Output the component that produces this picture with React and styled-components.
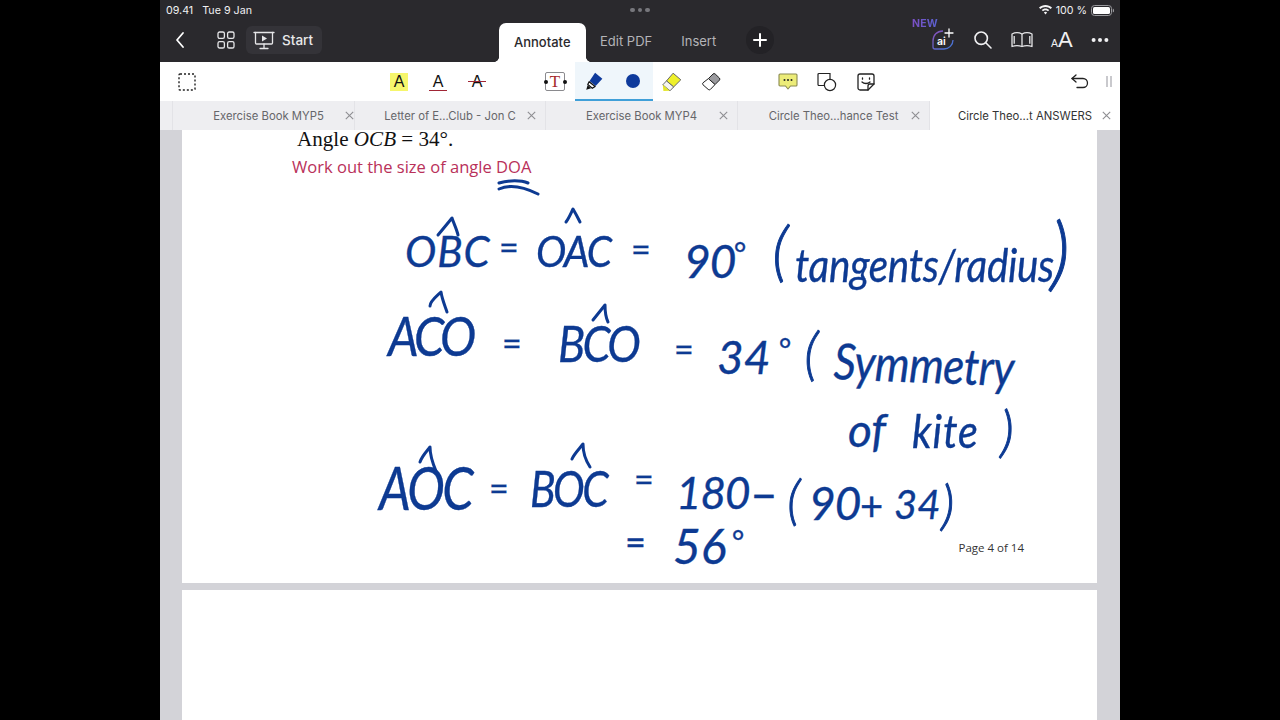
import React from "react";
import styled, { createGlobalStyle } from "styled-components";

const Global = createGlobalStyle`
  html, body { margin: 0; padding: 0; background: #000; height: 100%; overflow: hidden; }
  #root { height: 100%; }
  * { box-sizing: border-box; }
`;

const UI = `"Inter", "Liberation Sans", sans-serif`;
const INK = "#0d3a92";

const Stage = styled.div`
  height: 720px;
  display: flex;
  justify-content: center;
  background: #000;
`;
const Tablet = styled.div`
  width: 960px;
  height: 720px;
  display: flex;
  flex-direction: column;
  overflow: hidden;
  font-family: ${UI};
`;

/* Status bar */
const StatusBar = styled.div`
  height: 20px;
  flex: none;
  display: grid;
  grid-template-columns: 1fr auto 1fr;
  align-items: center;
  padding: 0 6px;
  background: #2a292d;
  color: #f0f0f2;
  font-size: 10.7px;
`;
const StatusLeft = styled.div`
  display: flex;
  gap: 9px;
`;
const StatusDots = styled.div`
  display: flex;
  gap: 3px;
  & > i {
    width: 4.5px;
    height: 4.5px;
    border-radius: 50%;
    background: #77777c;
  }
`;
const StatusRight = styled.div`
  justify-self: end;
  display: flex;
  align-items: center;
  gap: 4px;
`;

/* Dark navigation bar */
const NavBar = styled.div`
  height: 42px;
  flex: none;
  display: flex;
  align-items: flex-end;
  background: #2a292d;
  color: #fff;
`;
const NavLeft = styled.div`
  width: 339px;
  height: 42px;
  padding-left: 13px;
  padding-bottom: 2px;
  display: flex;
  align-items: center;
`;
const BackSlot = styled.div`
  display: flex;
  justify-content: center;
  width: 14px;
  flex: none;
`;
const GridSlot = styled.div`
  display: flex;
  justify-content: center;
  width: 24px;
  margin-left: 27px;
  flex: none;
`;
const StartButton = styled.div`
  width: 76px;
  height: 28px;
  margin-left: 8px;
  display: flex;
  align-items: center;
  gap: 7px;
  padding-left: 7px;
  background: #343338;
  border-radius: 6px;
  font-size: 13.5px;
  font-weight: 500;
  color: #e8e8ea;
`;
const ModeTab = styled.div`
  position: relative;
  height: ${(p) => (p.$active ? 39 : 36)}px;
  padding: 0 ${(p) => (p.$active ? 15 : 14.5)}px;
  padding-bottom: ${(p) => (p.$active ? 2 : 0)}px;
  margin-bottom: ${(p) => (p.$active ? 0 : 3)}px;
  display: flex;
  align-items: center;
  font-size: 13px;
  font-weight: ${(p) => (p.$active ? 500 : 400)};
  color: ${(p) => (p.$active ? "#2a292d" : "#b4b4b8")};
  background: ${(p) => (p.$active ? "#fff" : "transparent")};
  border-radius: 7px 7px 0 0;
`;
const ActiveTabFlare = styled.i`
  position: absolute;
  bottom: 0;
  width: 5px;
  height: 5px;
  ${(p) => (p.$side === "left" ? "left: -5px;" : "right: -5px;")}
  background: radial-gradient(
    circle at ${(p) => (p.$side === "left" ? "0 0" : "100% 0")},
    transparent 4.6px,
    #fff 5.2px
  );
`;
const PlusButton = styled.div`
  width: 28px;
  height: 28px;
  margin: 0 0 8px 15px;
  display: flex;
  align-items: center;
  justify-content: center;
  border-radius: 50%;
  background: #232226;
`;
const NavRight = styled.div`
  margin-left: auto;
  height: 42px;
  padding: 0 11px 2px 0;
  display: flex;
  align-items: center;
  gap: 18px;
`;
const AiWrap = styled.div`
  position: relative;
  width: 24px;
  height: 24px;
`;
const NewBadge = styled.span`
  position: absolute;
  left: -19px;
  top: -11px;
  font-size: 10.5px;
  font-weight: 700;
  letter-spacing: 0.2px;
  background: linear-gradient(90deg, #7c4fc4, #5a62d0);
  -webkit-background-clip: text;
  background-clip: text;
  color: transparent;
`;

/* White tool bar */
const ToolBar = styled.div`
  height: 39px;
  flex: none;
  display: flex;
  align-items: stretch;
  background: #fff;
  padding-left: 7.5px;
  padding-right: 1px;
`;
const Tool = styled.div`
  width: 39px;
  display: flex;
  align-items: center;
  justify-content: center;
  flex: none;
`;
const ToolGroup = styled.div`
  display: flex;
  margin-left: ${(p) => p.$gap || 0}px;
`;
const ActiveGroup = styled(ToolGroup)`
  width: 78px;
  background: #eff6fb;
  border-bottom: 2px solid #3f9fd8;
`;
const TailGroup = styled(ToolGroup)`
  margin-left: auto;
`;
const NarrowTool = styled(Tool)`
  width: 20px;
`;
const GlyphA = styled.span`
  position: relative;
  width: 18px;
  height: 18px;
  display: flex;
  align-items: center;
  justify-content: center;
  font-family: "Liberation Sans", sans-serif;
  font-size: 16px;
  line-height: 1;
  color: #111;
  background: ${(p) => (p.$hl ? "#f6f66c" : "transparent")};
  &::after {
    content: "";
    display: ${(p) => (p.$mark ? "block" : "none")};
    position: absolute;
    left: 0;
    right: 0;
    height: 1.5px;
    background: #a02535;
    top: ${(p) => (p.$mark === "under" ? 17 : 8)}px;
  }
`;
const TextBoxIcon = styled.span`
  position: relative;
  width: 20px;
  height: 19px;
  display: flex;
  align-items: center;
  justify-content: center;
  border: 1.2px solid #8a8a8e;
  border-radius: 2px;
  font-family: "Liberation Serif", serif;
  font-size: 17px;
  color: #a52a2a;
  &::before,
  &::after {
    content: "";
    position: absolute;
    top: 6.5px;
    width: 4px;
    height: 4px;
    border-radius: 50%;
    background: #111;
  }
  &::before { left: -2.5px; }
  &::after { right: -2.5px; }
`;
const ColorDot = styled.span`
  width: 14px;
  height: 14px;
  border-radius: 50%;
  background: #0e3a9c;
`;

/* Document tabs */
const TabStrip = styled.div`
  height: 29px;
  flex: none;
  display: flex;
  background: #eeeef1;
  padding-left: 12px;
`;
const DocTab = styled.div`
  width: ${(p) => p.$w}px;
  flex: none;
  display: grid;
  grid-template-columns: 1fr auto 1fr;
  align-items: center;
  padding-left: ${(p) => p.$pl || 0}px;
  font-size: 11.3px;
  color: ${(p) => (p.$active ? "#333" : "#66666a")};
  background: ${(p) => (p.$active ? "#fff" : "transparent")};
  border-left: 1px solid #e3e3e7;
`;
const DocTitle = styled.span`
  grid-column: 2;
  white-space: nowrap;
`;
const DocClose = styled.span`
  grid-column: 3;
  justify-self: end;
  padding-right: ${(p) => p.$inset}px;
  display: flex;
  color: #8e8e92;
`;

/* Document area */
const Viewer = styled.div`
  flex: 1;
  min-height: 0;
  padding: 0 23px 0 22px;
  background: #d3d3d8;
  display: flex;
  flex-direction: column;
  gap: 7px;
`;
const Page = styled.div`
  position: relative;
  height: 453px;
  flex: none;
  background: #fff;
  display: flex;
  flex-direction: column;
`;
const BlankPage = styled.div`
  flex: 1;
  background: #fff;
`;
const Question = styled.div`
  margin: 0 0 0 115px;
  font-family: "Liberation Serif", serif;
  font-size: 21.1px;
  line-height: 18px;
  color: #111;
  white-space: nowrap;
`;
const Task = styled.div`
  margin: 8px 0 0 110px;
  font-family: "Open Sans", sans-serif;
  font-size: 16.55px;
  font-weight: 500;
  line-height: 22px;
  color: #b9315a;
  white-space: nowrap;
`;
const PageNumber = styled.div`
  margin: auto 73px 27px auto;
  font-family: "Open Sans", sans-serif;
  font-size: 11.5px;
  line-height: 16px;
  color: #333;
`;

/* Ink annotations lying over the page: their place on the page is the content */
const InkLayer = styled.div`
  position: absolute;
  inset: 0;
  pointer-events: none;
`;
const InkMarks = styled.svg`
  position: absolute;
  left: 0;
  top: 0;
  width: 915px;
  height: 453px;
`;
const InkText = styled.span`
  position: absolute;
  left: ${(p) => p.$x - 182}px;
  top: ${(p) => p.$y - 130 - p.$s}px;
  font-family: "Lato", "Noto Sans", sans-serif;
  font-style: ${(p) => (p.$plain ? "normal" : "italic")};
  font-weight: ${(p) => (p.$thin ? 300 : 400)};
  font-size: ${(p) => p.$s}px;
  line-height: ${(p) => p.$s * 1.2}px;
  letter-spacing: ${(p) => p.$ls || 0}px;
  -webkit-text-stroke: ${(p) => (p.$thin ? 0.9 : 0.35)}px ${INK};
  color: ${INK};
  white-space: nowrap;
  transform-origin: left bottom;
  transform: scaleX(${(p) => p.$sx || 1}) rotate(${(p) => p.$r || 0}deg);
`;

const inkWords = [
  { t: "OBC", x: 405, y: 268, s: 42, ls: 1 },
  { t: "=", x: 499, y: 261, s: 34, plain: 1 },
  { t: "OAC", x: 536, y: 268, s: 42, ls: -2, sx: 0.97 },
  { t: "=", x: 631, y: 263, s: 34, plain: 1 },
  { t: "90", x: 684, y: 279, s: 46, ls: -1 },
  { t: "°", x: 733, y: 265, s: 30 },
  { t: "(", x: 772, y: 275, s: 66, thin: 1 },
  { t: "tangents/radius", x: 795, y: 283, s: 46, ls: -0.4, sx: 0.88 },
  { t: ")", x: 1050, y: 282, s: 80, thin: 1 },
  { t: "ACO", x: 388, y: 358, s: 54, ls: -4, sx: 0.9 },
  { t: "=", x: 502, y: 357, s: 34, plain: 1 },
  { t: "BCO", x: 558, y: 363, s: 50, ls: -3, sx: 0.9 },
  { t: "=", x: 674, y: 363, s: 34, plain: 1 },
  { t: "34", x: 717, y: 375, s: 46, ls: 0 },
  { t: "°", x: 778, y: 361, s: 30 },
  { t: "(", x: 804, y: 375, s: 58, thin: 1 },
  { t: "Symmetry", x: 833, y: 380, s: 50, ls: -0.6, r: 2, sx: 0.88 },
  { t: "of", x: 848, y: 448, s: 46 },
  { t: "kite", x: 912, y: 449, s: 46, ls: 1, sx: 0.9 },
  { t: ")", x: 1000, y: 452, s: 56, thin: 1 },
  { t: "AOC", x: 379, y: 511, s: 60, ls: -3, sx: 0.84 },
  { t: "=", x: 489, y: 502, s: 34, plain: 1 },
  { t: "BOC", x: 530, y: 508, s: 50, ls: -3, sx: 0.85 },
  { t: "=", x: 634, y: 493, s: 34, plain: 1 },
  { t: "180", x: 676, y: 510, s: 44, ls: -1 },
  { t: "–", x: 750, y: 512, s: 48, plain: 1 },
  { t: "(", x: 787, y: 521, s: 54, thin: 1 },
  { t: "90", x: 809, y: 521, s: 46, ls: -1 },
  { t: "+", x: 860, y: 522, s: 40, plain: 1 },
  { t: "34", x: 894, y: 520, s: 40, ls: 0 },
  { t: ")", x: 941, y: 526, s: 54, thin: 1 },
  { t: "=", x: 625, y: 556, s: 36, plain: 1 },
  { t: "56", x: 673, y: 565, s: 48, ls: 0 },
  { t: "°", x: 731, y: 553, s: 30 },
];

/* Hat marks and the double underline, in screen coordinates */
const inkStrokes = [
  "M438 235 C443 229 448 223 452 218 C454 224 457 230 458 235",
  "M566 222 C569 218 571 213 573 209 C576 214 578 218 580 222",
  "M430 306 C430 301 437 296 441 292 C442 299 445 306 447 312",
  "M593 320 C597 315 601 310 605 305 C605 312 606 318 608 322",
  "M420 462 C422 456 427 451 430 447 C430 455 433 464 436 471",
  "M572 459 C574 454 580 448 583 444 C583 452 586 461 590 467",
  "M499 183 C509 180 521 180 528 183",
  "M499 189 C510 184 524 187 538 194",
];

const Back = () => (
  <svg width="12" height="18" viewBox="0 0 12 18" fill="none" stroke="#fff" strokeWidth="1.8" strokeLinecap="round" strokeLinejoin="round">
    <path d="M9 2 L3 9 L9 16" />
  </svg>
);
const GridIcon = () => (
  <svg width="18" height="18" viewBox="0 0 18 18" fill="none" stroke="#e6e6e8" strokeWidth="1.3">
    <rect x="1" y="1" width="6.4" height="6.4" rx="1.6" />
    <rect x="10.6" y="1" width="6.4" height="6.4" rx="1.6" />
    <rect x="1" y="10.6" width="6.4" height="6.4" rx="1.6" />
    <rect x="10.6" y="10.6" width="6.4" height="6.4" rx="1.6" />
  </svg>
);
const ScreenIcon = () => (
  <svg width="22" height="19" viewBox="0 0 22 19" fill="none" stroke="#e6e6e8" strokeWidth="1.3" strokeLinecap="round">
    <path d="M1 1.5 H21" />
    <path d="M2.5 1.5 V12 a1 1 0 0 0 1 1 H18.5 a1 1 0 0 0 1 -1 V1.5" />
    <path d="M11 13 V17 M7 17.5 H15" />
    <path d="M9 4.5 L14 7.5 L9 10.5 Z" fill="#e6e6e8" stroke="none" />
  </svg>
);
const Plus = () => (
  <svg width="14" height="14" viewBox="0 0 14 14" stroke="#fff" strokeWidth="2" strokeLinecap="round">
    <path d="M7 1 V13 M1 7 H13" />
  </svg>
);
const AiIcon = () => (
  <svg width="24" height="24" viewBox="0 0 24 24" fill="none">
    <defs>
      <linearGradient id="aig" x1="0" y1="0" x2="1" y2="1">
        <stop offset="0" stopColor="#8a4fb8" />
        <stop offset="1" stopColor="#3f78d8" />
      </linearGradient>
    </defs>
    <path d="M12 3 C6 3 2 7 2 13 V19 a2 2 0 0 0 2 2 H13 A9 9 0 0 0 22 12" stroke="url(#aig)" strokeWidth="1.3" />
    <text x="6" y="17" fontFamily="Inter, sans-serif" fontSize="10.5" fontWeight="600" fill="#fff">ai</text>
    <path d="M18 1 V9 M14 5 H22" stroke="#fff" strokeWidth="1.3" strokeLinecap="round" />
  </svg>
);
const Search = () => (
  <svg width="20" height="20" viewBox="0 0 20 20" fill="none" stroke="#f0f0f2" strokeWidth="1.6" strokeLinecap="round">
    <circle cx="8.2" cy="8.2" r="6.2" />
    <path d="M12.8 12.8 L18 18" />
  </svg>
);
const BookIcon = () => (
  <svg width="22" height="18" viewBox="0 0 22 18" fill="none" stroke="#e6e6e8" strokeWidth="1.3" strokeLinejoin="round">
    <path d="M1 3 C4 1.4 8 1.4 11 3 C14 1.4 18 1.4 21 3 V15.5 C18 14.4 14 14.4 11 15.5 C8 14.4 4 14.4 1 15.5 Z" />
    <path d="M11 3 V15.5" />
    <path d="M3.2 5 V12.8 M18.8 5 V12.8" />
  </svg>
);
const FontSizeLabel = styled.span`
  display: flex;
  align-items: baseline;
  font-family: "Liberation Sans", sans-serif;
  color: #f0f0f2;
  width: 22px;
  font-size: 22px;
  line-height: 1;
  & > small {
    font-size: 10.5px;
    margin-right: 0;
  }
`;
const Ellipsis = () => (
  <svg width="18" height="6" viewBox="0 0 18 6" fill="#f0f0f2">
    <circle cx="2.6" cy="3" r="2" />
    <circle cx="9" cy="3" r="2" />
    <circle cx="15.4" cy="3" r="2" />
  </svg>
);
const Wifi = () => (
  <svg width="13" height="10" viewBox="0 0 13 10" fill="#f4f4f6">
    <path d="M6.5 0 C9 0 11.2 1 13 2.6 L11.7 4 C10.3 2.7 8.5 1.9 6.5 1.9 C4.5 1.9 2.7 2.7 1.3 4 L0 2.6 C1.8 1 4 0 6.5 0 Z" />
    <path d="M6.5 3.4 C8 3.4 9.3 4 10.3 4.9 L9 6.3 C8.3 5.7 7.5 5.3 6.5 5.3 C5.5 5.3 4.7 5.7 4 6.3 L2.7 4.9 C3.7 4 5 3.4 6.5 3.4 Z" />
    <path d="M6.5 6.8 C7.1 6.8 7.7 7 8.1 7.4 L6.5 9.6 L4.9 7.4 C5.3 7 5.9 6.8 6.5 6.8 Z" />
  </svg>
);
const Battery = () => (
  <svg width="23" height="11" viewBox="0 0 23 11">
    <rect x="0.5" y="0.5" width="20" height="10" rx="3" fill="none" stroke="#9a9a9e" />
    <rect x="2" y="2" width="17" height="7" rx="1.6" fill="#fff" />
    <path d="M21.8 3.6 a2 2 0 0 1 0 3.8 Z" fill="#9a9a9e" />
  </svg>
);
const SelectIcon = () => (
  <svg width="18" height="18" viewBox="0 0 18 18" fill="none" stroke="#222" strokeWidth="1.4" strokeDasharray="2 2">
    <rect x="1" y="1" width="16" height="16" rx="1" />
  </svg>
);
const PenIcon = () => (
  <svg width="20" height="20" viewBox="0 0 18 18">
    <path d="M10 1.5 L16.5 7 L10.5 13.5 L5 9 Z" fill="#0e3a9c" />
    <path d="M4.6 9.6 L10 14 L7.5 15.6 L3.4 12.2 Z" fill="#fff" stroke="#111" strokeWidth="1.1" strokeLinejoin="round" />
    <path d="M3.2 12.8 L6.4 15.6 L2 16.8 Z" fill="#111" />
  </svg>
);
const HighlighterIcon = () => (
  <svg width="22" height="22" viewBox="0 0 20 20">
    <path d="M11 2 L18 8 L11.5 14.5 L5 9 Z" fill="#eef02a" stroke="#666" strokeWidth="0.9" strokeLinejoin="round" />
    <path d="M5 9 L11.5 14.5 L8.2 18 L1.6 12.6 Z" fill="#f5f5f0" stroke="#666" strokeWidth="0.9" strokeLinejoin="round" />
    <path d="M1.6 12.6 L8 18 L2.2 18.2 Z" fill="#e4e62a" />
  </svg>
);
const EraserIcon = () => (
  <svg width="20" height="20" viewBox="0 0 20 20" strokeLinejoin="round">
    <path d="M12 2 a1.6 1.6 0 0 1 2.2 0 L18.4 6 a1.6 1.6 0 0 1 0 2.2 L14 12.6 L7.4 6.6 Z" fill="#9a9a9e" stroke="#222" strokeWidth="1" />
    <path d="M7.4 6.6 L14 12.6 L9.4 17.4 a1.6 1.6 0 0 1 -2.2 0 L2 12.8 a1.4 1.4 0 0 1 0 -2 Z" fill="#fff" stroke="#222" strokeWidth="1" />
  </svg>
);
const CommentIcon = () => (
  <svg width="20" height="18" viewBox="0 0 20 18">
    <path d="M2 1 H18 a1 1 0 0 1 1 1 V12 a1 1 0 0 1 -1 1 H12.5 L10 16 L7.5 13 H2 a1 1 0 0 1 -1 -1 V2 a1 1 0 0 1 1 -1 Z" fill="#ecec78" stroke="#8a8a50" strokeWidth="1.1" strokeLinejoin="round" />
    <circle cx="6.5" cy="7" r="1" fill="#222" />
    <circle cx="10" cy="7" r="1" fill="#222" />
    <circle cx="13.5" cy="7" r="1" fill="#222" />
  </svg>
);
const ShapesIcon = () => (
  <svg width="20" height="20" viewBox="0 0 20 20" stroke="#222" strokeWidth="1.2">
    <path d="M2 1.5 H13 V8 A5.6 5.6 0 0 0 7.4 13.5 H2 a1 1 0 0 1 -1 -1 V2.5 a1 1 0 0 1 1 -1 Z" fill="#fff" />
    <circle cx="13" cy="13" r="5.6" fill="#fff" />
  </svg>
);
const StickerIcon = () => (
  <svg width="18" height="18" viewBox="0 0 18 18" fill="none" stroke="#222" strokeWidth="1.3" strokeLinecap="round" strokeLinejoin="round">
    <path d="M3 1 H15 a2 2 0 0 1 2 2 V11 L11 17 H3 a2 2 0 0 1 -2 -2 V3 a2 2 0 0 1 2 -2 Z" />
    <path d="M17 11 H13 a2 2 0 0 0 -2 2 V17" />
    <path d="M5.5 5 V6.2 M12.5 5 V6.2" />
    <path d="M5 9 C7 11 11 11 13 9" />
  </svg>
);
const UndoIcon = () => (
  <svg width="18" height="15" viewBox="0 0 18 15" fill="none" stroke="#222" strokeWidth="1.3" strokeLinecap="round" strokeLinejoin="round">
    <path d="M5 1 L1 4.5 L5 8" />
    <path d="M1 4.5 H12 a4.5 4.5 0 0 1 0 9 H6" />
  </svg>
);
const GripIcon = () => (
  <svg width="6" height="11" viewBox="0 0 6 11" fill="#c9c9cd">
    <rect x="0" y="0" width="2" height="11" />
    <rect x="4" y="0" width="2" height="11" />
  </svg>
);
const CloseIcon = () => (
  <svg width="9" height="9" viewBox="0 0 9 9" stroke="currentColor" strokeWidth="1.1">
    <path d="M0.8 0.8 L8.2 8.2 M8.2 0.8 L0.8 8.2" />
  </svg>
);

const docTabs = [
  { t: "Exercise Book MYP5", w: 182, pl: 10, inset: 0 },
  { t: "Letter of E...Club - Jon C", w: 191, inset: 9 },
  { t: "Exercise Book MYP4", w: 192, inset: 9 },
  { t: "Circle Theo...hance Test", w: 192, inset: 9 },
  { t: "Circle Theo...t ANSWERS", w: 191, inset: 9, active: true },
];

export default function App() {
  return (
    <Stage>
      <Global />
      <Tablet>
        <StatusBar>
          <StatusLeft>
            <span>09.41</span>
            <span>Tue 9 Jan</span>
          </StatusLeft>
          <StatusDots>
            <i />
            <i />
            <i />
          </StatusDots>
          <StatusRight>
            <Wifi />
            <span>100 %</span>
            <Battery />
          </StatusRight>
        </StatusBar>

        <NavBar>
          <NavLeft>
            <BackSlot>
              <Back />
            </BackSlot>
            <GridSlot>
              <GridIcon />
            </GridSlot>
            <StartButton>
              <ScreenIcon />
              <span>Start</span>
            </StartButton>
          </NavLeft>
          <ModeTab $active>
            <ActiveTabFlare $side="left" />
            Annotate
            <ActiveTabFlare $side="right" />
          </ModeTab>
          <ModeTab>Edit PDF</ModeTab>
          <ModeTab>Insert</ModeTab>
          <PlusButton>
            <Plus />
          </PlusButton>
          <NavRight>
            <AiWrap>
              <NewBadge>NEW</NewBadge>
              <AiIcon />
            </AiWrap>
            <Search />
            <BookIcon />
            <FontSizeLabel>
              <small>A</small>A
            </FontSizeLabel>
            <Ellipsis />
          </NavRight>
        </NavBar>

        <ToolBar>
          <ToolGroup>
            <Tool>
              <SelectIcon />
            </Tool>
          </ToolGroup>
          <ToolGroup $gap={173}>
            <Tool>
              <GlyphA $hl>A</GlyphA>
            </Tool>
            <Tool>
              <GlyphA $mark="under">A</GlyphA>
            </Tool>
            <Tool>
              <GlyphA $mark="strike">A</GlyphA>
            </Tool>
          </ToolGroup>
          <ToolGroup $gap={39}>
            <Tool>
              <TextBoxIcon>T</TextBoxIcon>
            </Tool>
          </ToolGroup>
          <ActiveGroup>
            <Tool>
              <PenIcon />
            </Tool>
            <Tool>
              <ColorDot />
            </Tool>
          </ActiveGroup>
          <ToolGroup>
            <Tool>
              <HighlighterIcon />
            </Tool>
            <Tool>
              <EraserIcon />
            </Tool>
          </ToolGroup>
          <ToolGroup $gap={38}>
            <Tool>
              <CommentIcon />
            </Tool>
            <Tool>
              <ShapesIcon />
            </Tool>
            <Tool>
              <StickerIcon />
            </Tool>
          </ToolGroup>
          <TailGroup>
            <Tool>
              <UndoIcon />
            </Tool>
            <NarrowTool>
              <GripIcon />
            </NarrowTool>
          </TailGroup>
        </ToolBar>

        <TabStrip>
          {docTabs.map((d) => (
            <DocTab key={d.t} $w={d.w} $pl={d.pl} $active={d.active}>
              <DocTitle>{d.t}</DocTitle>
              <DocClose $inset={d.inset}>
                <CloseIcon />
              </DocClose>
            </DocTab>
          ))}
        </TabStrip>

        <Viewer>
          <Page>
            <Question>
              Angle <em>OCB</em> = 34°.
            </Question>
            <Task>Work out the size of angle DOA</Task>
            <PageNumber>Page 4 of 14</PageNumber>
            <InkLayer>
              <InkMarks viewBox="182 130 915 453" fill="none" stroke={INK} strokeWidth="3" strokeLinecap="round" strokeLinejoin="round">
                {inkStrokes.map((d) => (
                  <path key={d} d={d} />
                ))}
              </InkMarks>
              {inkWords.map((w) => (
                <InkText key={w.t + w.x} $x={w.x} $y={w.y} $s={w.s} $ls={w.ls} $plain={w.plain} $thin={w.thin} $r={w.r} $sx={w.sx}>
                  {w.t}
                </InkText>
              ))}
            </InkLayer>
          </Page>
          <BlankPage />
        </Viewer>
      </Tablet>
    </Stage>
  );
}
